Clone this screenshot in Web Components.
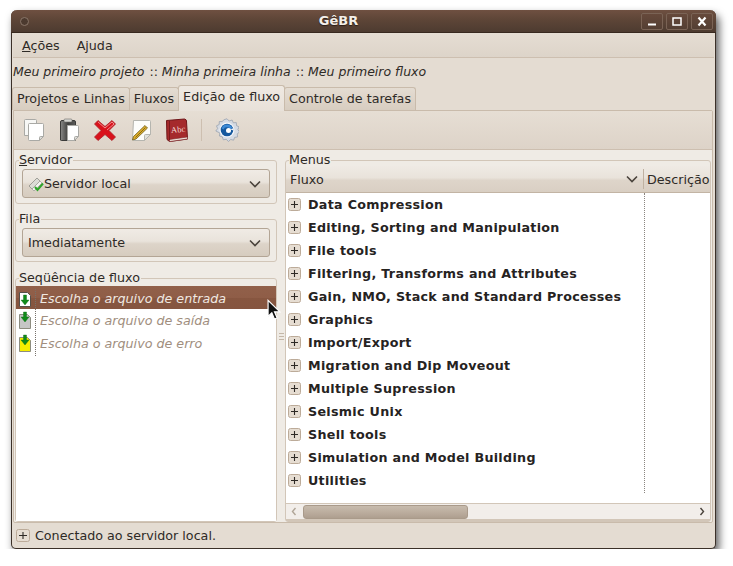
<!DOCTYPE html>
<html lang="pt">
<head>
<meta charset="utf-8">
<title>GêBR</title>
<style>
  html, body { margin: 0; padding: 0; background: #fff; overflow: hidden; }
  body { font: 12.7px "DejaVu Sans", sans-serif; color: #2e2a26; }
</style>
</head>
<body>
<ge-window>
  <ge-titlebar slot="title">GêBR</ge-titlebar>
  <ge-menubar></ge-menubar>
  <ge-crumbs></ge-crumbs>
  <ge-tabs></ge-tabs>
  <ge-panel>
    <ge-toolbar slot="toolbar"></ge-toolbar>
    <div slot="left">
      <ge-frame label="Servidor" mnemonic="S" pad="8px 6px 5px">
        <ge-combo server>Servidor local</ge-combo>
      </ge-frame>
      <ge-frame label="Fila" pad="8px 6px 4px" style="margin-top:15px">
        <ge-combo>Imediatamente</ge-combo>
      </ge-frame>
      <ge-frame label="Seqüência de fluxo" pad="7px 0 0" grow style="margin-top:16px">
        <ge-flow-list></ge-flow-list>
      </ge-frame>
    </div>
    <ge-frame slot="right" label="Menus" pad="5px 0 0" grow>
      <ge-menu-tree></ge-menu-tree>
    </ge-frame>
  </ge-panel>
  <ge-status>Conectado ao servidor local.</ge-status>
  <ge-cursor></ge-cursor>
</ge-window>

<script>
// small expander box used by the tree and the status bar
const expander = (w, h) => `<svg width="${w}" height="${h}" viewBox="0 0 ${w} ${h}" style="display:block;flex:none">
  <rect x=".5" y=".5" width="${w - 1}" height="${h - 1}" rx="2" fill="#e6ddd2" stroke="#bcab99"/>
  <path d="M3 ${h / 2}h${w - 6}M${w / 2} 3v${h - 6}" stroke="#2e2a26" stroke-width="1.1"/>
</svg>`;

const CHEVRON = `<svg width="14" height="8" viewBox="0 0 14 8" style="display:block;flex:none">
  <path d="M2 1.500l5 5 5-5" fill="none" stroke="#4a433c" stroke-width="1.600"/>
</svg>`;

class GeWindow extends HTMLElement {
  constructor() {
    super();
    this.attachShadow({ mode: 'open' });
  }
  connectedCallback() {
    this.shadowRoot.innerHTML = `
      <style>
        :host {
          display: flex;
          flex-direction: column;
          position: relative;
          box-sizing: border-box;
          width: 705px;
          height: 539px;
          margin: 10px 0 0 11px;
          background: #e4dcd2;
          border: 1px solid #3b3028;
          border-top: 0;
          border-radius: 6px 6px 5px 5px;
          box-shadow: 3px 5px 8px rgba(0,0,0,.65);
        }
      </style>
      <slot name="title"></slot>
      <slot></slot>`;
  }
}

class GeTitlebar extends HTMLElement {
  constructor() {
    super();
    this.attachShadow({ mode: 'open' });
  }
  connectedCallback() {
    this.shadowRoot.innerHTML = `
      <style>
        :host {
          display: flex;
          align-items: center;
          flex: none;
          height: 23px;
          margin: 0 -1px;
          padding: 0 3px 0 9px;
          box-sizing: border-box;
          position: relative;
          background: linear-gradient(#6f5041, #5d4537 45%, #4d3b30);
          border-bottom: 1px solid #38291f;
          border-radius: 6px 6px 0 0;
          color: #f4efe9;
          font-weight: bold;
          font-size: 13px;
        }
        .dot {
          width: 7px; height: 7px; border-radius: 50%;
          border: 1px solid #8a7669;
          background: #4c3a2f;
        }
        .name {
          position: absolute; left: 0; right: 50px; top: 0; line-height: 22px;
          text-align: center;
          text-shadow: 0 1px 1px #2a1d15;
        }
        .btns { margin-left: auto; display: flex; gap: 3px; position: relative; }
        .btn {
          width: 20px; height: 15px;
          border: 1px solid #7a6355;
          border-radius: 2px;
          background: linear-gradient(#66493b, #543f33);
          display: flex; align-items: center; justify-content: center;
        }
      </style>
      <div class="dot"></div>
      <div class="name"><slot></slot></div>
      <div class="btns">
        <div class="btn"><svg width="12" height="11" viewBox="0 0 12 11"><path d="M2 8.500h8" stroke="#fff" stroke-width="2"/></svg></div>
        <div class="btn"><svg width="12" height="11" viewBox="0 0 12 11"><rect x="2" y="2" width="8" height="7" fill="none" stroke="#fff" stroke-width="1.500"/></svg></div>
        <div class="btn"><svg width="12" height="11" viewBox="0 0 12 11"><path d="M2.500 1.500l7 8M9.500 1.500l-7 8" stroke="#fff" stroke-width="2.200"/></svg></div>
      </div>`;
  }
}

class GeMenubar extends HTMLElement {
  constructor() {
    super();
    this.attachShadow({ mode: 'open' });
  }
  connectedCallback() {
    this.shadowRoot.innerHTML = `
      <style>
        :host {
          display: flex;
          flex: none;
          gap: 17px;
          height: 25px;
          margin: 0 1px;
          padding: 0 9px;
          align-items: center;
          box-sizing: border-box;
          background: linear-gradient(#e5ddd3, #ddd4c9);
          border-bottom: 1px solid #cdbfb0;
        }
        u { text-underline-offset: 1px; }
      </style>
      <span><u>A</u>ções</span>
      <span>Ajuda</span>`;
  }
}

class GeCrumbs extends HTMLElement {
  constructor() {
    super();
    this.attachShadow({ mode: 'open' });
  }
  connectedCallback() {
    this.shadowRoot.innerHTML = `
      <style>
        :host {
          display: block;
          flex: none;
          height: 27px;
          line-height: 27px;
          padding-left: 1px;
          white-space: nowrap;
          font-style: italic;
          font-size: 12.5px;
        }
        b { font-weight: normal; font-style: normal; margin-left: 1px; }
      </style>
      <span>Meu primeiro projeto <b>::</b> Minha primeira linha <b>::</b> Meu primeiro fluxo</span>`;
  }
}

class GeTabs extends HTMLElement {
  constructor() {
    super();
    this.attachShadow({ mode: 'open' });
  }
  connectedCallback() {
    const tabs = ['Projetos e Linhas', 'Fluxos', 'Edição de fluxo', 'Controle de tarefas'];
    this.shadowRoot.innerHTML = `
      <style>
        :host {
          display: flex;
          flex: none;
          align-items: flex-end;
          height: 25px;
          margin-left: 1px;
          position: relative;
          z-index: 1;
        }
        .tab {
          box-sizing: border-box;
          height: 23px;
          line-height: 22px;
          padding: 0 4px;
          border: 1px solid #c9bbab;
          border-bottom: 0;
          border-radius: 3px 3px 0 0;
          background: linear-gradient(#e4dcd2, #d8cdc0);
          margin-left: -1px;
          white-space: nowrap;
        }
        .tab:first-child { margin-left: 0; }
        .tab.on {
          height: 26px;
          margin-bottom: -1px;
          line-height: 22px;
          background: linear-gradient(#efe9e2, #e8e1d9);
          z-index: 1;
        }
      </style>
      ${tabs.map((t, i) => `<div class="tab${i === 2 ? ' on' : ''}">${t}</div>`).join('')}`;
  }
}

class GeToolbar extends HTMLElement {
  constructor() {
    super();
    this.attachShadow({ mode: 'open' });
  }
  connectedCallback() {
    this.shadowRoot.innerHTML = `
      <style>
        :host {
          display: flex;
          align-items: center;
          height: 39px;
          padding-left: 7px;
          box-sizing: border-box;
          background: linear-gradient(#e6ded4, #ddd3c8);
          border-bottom: 1px solid #cdbfb0;
        }
        svg { display: block; flex: none; }
        .i { width: 24px; height: 24px; margin-right: 12px; }
        .sep { width: 1px; height: 22px; background: #cdbfb0; margin: 0 13px 0 0; }
      </style>
      <div class="i"><svg width="24" height="24" viewBox="0 0 24 24">
        <path d="M3.500 2.500q0-1 1-1h10q1 0 1 1v15h-12z" fill="#f7f7f5" stroke="#a9a9a5"/>
        <path d="M7.500 6.500q0-1 1-1h13q1 0 1 1v12l-4 4h-10q-1 0-1-1z" fill="#fff" stroke="#a9a9a5"/>
        <path d="M18.500 22.500v-3q0-1 1-1h3z" fill="#dcdcd8" stroke="#a9a9a5"/>
      </svg></div>
      <div class="i"><svg width="24" height="24" viewBox="0 0 24 24">
        <defs><linearGradient id="clip" x1="0" x2="1" y1="0" y2="0"><stop offset="0" stop-color="#8a8a88"/><stop offset=".5" stop-color="#3f3f3d"/><stop offset="1" stop-color="#5c5c5a"/></linearGradient></defs>
        <path d="M3.500 4q0-1.500 1.500-1.500h12q1.500 0 1.500 1.500v18q0 .5-1 .5h-13q-1 0-1-.5z" fill="url(#clip)" stroke="#3a3a38"/>
        <rect x="7" y="1" width="8" height="3" rx="1" fill="#d5d5d1" stroke="#6b6b68" stroke-width=".6"/>
        <path d="M10.500 7.500h10q1 0 1 1v10l-4 4h-7z" fill="#fff" stroke="#a9a9a5"/>
        <path d="M17.500 22.500v-3q0-1 1-1h3z" fill="#dcdcd8" stroke="#a9a9a5"/>
      </svg></div>
      <div class="i"><svg width="24" height="24" viewBox="0 0 24 24">
        <path d="M5 2.500l7 6 7-6 3.500 3.500-6.500 6.500 6.500 6.500-3.500 3.500-7-6-7 6-3.500-3.500 6.500-6.500-6.500-6.500z" fill="#d9121c" stroke="#a8232a" stroke-width=".8"/>
        <path d="M5 4l7 6 7-6 2 2-7 6" fill="none" stroke="#f28a8a" stroke-width="1"/>
      </svg></div>
      <div class="i"><svg width="24" height="24" viewBox="0 0 24 24">
        <path d="M4.500 2.500h16q1 0 1 1v13l-6 6h-11q-1 0-1-1z" fill="#fdfdfb" stroke="#b5b5af"/>
        <path d="M15.500 22.500v-5q0-1 1-1h5z" fill="#e2e2dc" stroke="#b5b5af"/>
        <path d="M16 7.500l2.500 2.500-11.500 11-3.500 1 1-3.500z" fill="#dfae2b" stroke="#6a5a1c" stroke-width=".8"/>
        <path d="M6.500 19.500l10-10" stroke="#7d6414" stroke-width=".9"/>
      </svg></div>
      <div class="i"><svg width="24" height="24" viewBox="0 0 24 24">
        <path d="M1.500 2.500l18-1.500q2 .5 2 2l1 18-18 2.500-2.500-2z" fill="#a52a2c" stroke="#6f1618"/>
        <path d="M4.500 23.500l18-2.500v-2l-18 2.500z" fill="#f1e9e0" stroke="#7d2426" stroke-width=".6"/>
        <path d="M4.500 3v19" stroke="#7c1a1d" stroke-width="1"/>
        <text x="6" y="14.500" font-family="Liberation Serif" font-size="8.500" fill="#f6dcd8" transform="rotate(-6 12 12)">Abc</text>
      </svg></div>
      <div class="sep"></div>
      <div class="i"><svg width="24" height="24" viewBox="0 0 24 24">
        <path d="M12 .8l2.200 2.200 2.900-1 1.200 2.800 3-.2.200 3 2.600 1.300-1.200 2.700 1.700 2.400-2.400 1.900.4 3-3 .5-1 2.800-2.900-.7-2.300 2-2.100-2.200-3 .5-1-2.900-2.900-.9.500-3L.8 13l1.800-2.400L1.500 7.800l2.700-1.300.1-3 3 .1L8.800 1.800z" fill="#d6dbe3" stroke="#9aa3b0" stroke-width=".8"/>
        <circle cx="12" cy="12" r="7.500" fill="#f4f6f9"/>
        <circle cx="12" cy="12" r="6.300" fill="#15589e"/>
        <path d="M12 6.500a5.500 5.500 0 0 1 5.300 3.500l-2.300 1.500a3 3 0 0 0-3-2.200 3 3 0 0 0-3.300 2.200L6.700 10.500A5.500 5.500 0 0 1 12 6.500z" fill="#3d8ad6"/>
        <circle cx="13.500" cy="12.500" r="2.500" fill="#fff"/>
        <path d="M15.500 11.500l3-1.500v2.500z" fill="#f4f6f9"/>
      </svg></div>`;
  }
}

class GePanel extends HTMLElement {
  constructor() {
    super();
    this.attachShadow({ mode: 'open' });
  }
  connectedCallback() {
    this.shadowRoot.innerHTML = `
      <style>
        :host {
          display: flex;
          flex-direction: column;
          flex: none;
          box-sizing: border-box;
          height: 413px;
          margin: 0 2px 0 1px;
          border: 1px solid #c9bbab;
          border-radius: 0 2px 2px 2px;
          background: #efebe5;
          position: relative;
        }
        .paned { display: flex; flex: 1; min-height: 0; }
        .left { display: flex; flex: none; width: 262px; margin: 10px 0 0 1px; }
        .right { display: flex; flex: 1; margin: 10px 1px 0 0; min-width: 0; }
        .grip {
          width: 8px; flex: none;
          display: flex; flex-direction: column; justify-content: center; gap: 2px;
          align-items: center;
          box-sizing: border-box;
        }
        .grip i { display: block; width: 5px; height: 1px; background: #c4b7a8; }
        ::slotted([slot=left]) { display: flex; flex-direction: column; flex: 1; min-width: 0; }
        ::slotted([slot=right]) { flex: 1; min-width: 0; }
      </style>
      <slot name="toolbar"></slot>
      <div class="paned">
        <div class="left"><slot name="left"></slot></div>
        <div class="grip"><i></i><i></i><i></i></div>
        <div class="right"><slot name="right"></slot></div>
      </div>`;
  }
}

class GeFrame extends HTMLElement {
  constructor() {
    super();
    this.attachShadow({ mode: 'open' });
  }
  connectedCallback() {
    const label = this.getAttribute('label');
    const m = this.getAttribute('mnemonic');
    const text = m ? `<u>${m}</u>${label.slice(m.length)}` : label;
    this.shadowRoot.innerHTML = `
      <style>
        :host {
          display: flex;
          flex-direction: column;
          box-sizing: border-box;
          min-height: 0;
          min-width: 0;
          position: relative;
          border: 1px solid #d2c6b8;
          border-radius: 3px;
          padding: ${this.getAttribute('pad')};
          ${this.hasAttribute('grow') ? 'flex: 1;' : 'flex: none;'}
        }
        .label {
          position: absolute;
          left: 3px;
          top: -9px;
          padding-right: 1px;
          line-height: 15px;
          background: #efebe5;
          color: #2e2a26;
        }
        u { text-underline-offset: 1px; }
      </style>
      <div class="label">${text}</div>
      <slot></slot>`;
  }
}

class GeCombo extends HTMLElement {
  constructor() {
    super();
    this.attachShadow({ mode: 'open' });
  }
  connectedCallback() {
    const icon = this.hasAttribute('server') ? `
      <svg width="17" height="16" viewBox="0 0 17 16" style="display:block;flex:none;margin:0 0 0 1px">
        <path d="M1 10l8-8 3 3-8 8z" fill="#dcdcd6" stroke="#8e8e88" stroke-width=".8"/>
        <path d="M4 13l8-8 2 2-8 8z" fill="#f3f3ef" stroke="#9a9a94" stroke-width=".7"/>
        <path d="M7 11l2.500 3 5.500-6.500" fill="none" stroke="#2fa52a" stroke-width="2"/>
      </svg>` : '';
    this.shadowRoot.innerHTML = `
      <style>
        :host {
          display: flex;
          align-items: center;
          box-sizing: border-box;
          height: 29px;
          padding: 0 7px 0 ${icon ? '4px' : '5px'};
          border: 1px solid #b3a595;
          border-radius: 3px;
          background: linear-gradient(#f0ebe5, #e9e3db 45%, #ddd4c9 55%, #d6ccbf);
        }
        .t { flex: 1; white-space: nowrap; margin-left: ${icon ? '-1px' : '0'}; }
      </style>
      ${icon}<div class="t"><slot></slot></div>${CHEVRON}`;
  }
}

class GeFlowList extends HTMLElement {
  constructor() {
    super();
    this.attachShadow({ mode: 'open' });
  }
  fileIcon(fill, on) {
    return `<svg width="12" height="19" viewBox="0 0 12 19" style="display:block;flex:none">
      <path d="M.5 3.500h8l3 3v11h-11z" fill="${fill}" stroke="${on ? '#55504a' : '#8d8d80'}"/>
      <path d="M4.500 ${on ? 6 : 1}h3v5h2.500l-4 5-4-5h2.500z" fill="#108a1a" stroke="#0a6a12" stroke-width=".4"/>
    </svg>`;
  }
  connectedCallback() {
    const rows = [
      ['#fff', 'Escolha o arquivo de entrada'],
      ['#c6c6c6', 'Escolha o arquivo de saída'],
      ['#f6ee00', 'Escolha o arquivo de erro']
    ];
    this.shadowRoot.innerHTML = `
      <style>
        :host {
          display: block;
          flex: 1;
          background: #fff;
          position: relative;
          font-style: italic;
          color: #a08e7e;
        }
        .row {
          display: flex;
          align-items: center;
          height: 23px;
          box-sizing: border-box;
          padding: 1px 0 0 3px;
          white-space: nowrap;
        }
        .row:nth-child(n+3) { height: 22.500px; }
        .row span { margin-left: 9px; }
        .row.on {
          background: linear-gradient(#91604a, #8f5d47 50%, #875640 52%, #855540);
          color: #f0e9e2;
        }
        .line {
          position: absolute;
          left: 19px; top: 3px; height: 67px;
          border-left: 1px dotted #77716a;
        }
      </style>
      ${rows.map((r, i) => `<div class="row${i === 0 ? ' on' : ''}">${this.fileIcon(r[0], i === 0)}<span>${r[1]}</span></div>`).join('')}
      <div class="line"></div>`;
  }
}

class GeMenuTree extends HTMLElement {
  constructor() {
    super();
    this.attachShadow({ mode: 'open' });
  }
  connectedCallback() {
    const items = [
      'Data Compression',
      'Editing, Sorting and Manipulation',
      'File tools',
      'Filtering, Transforms and Attributes',
      'Gain, NMO, Stack and Standard Processes',
      'Graphics',
      'Import/Export',
      'Migration and Dip Moveout',
      'Multiple Supression',
      'Seismic Unix',
      'Shell tools',
      'Simulation and Model Building',
      'Utilities'
    ];
    this.shadowRoot.innerHTML = `
      <style>
        :host {
          display: flex;
          flex-direction: column;
          flex: 1;
          min-height: 0;
          min-width: 0;
          background: #fff;
        }
        .head {
          display: flex;
          flex: none;
          height: 27px;
          box-sizing: border-box;
          background: linear-gradient(#efeae4, #e9e3db 45%, #ded5ca 55%, #d9cfc3);
          border-bottom: 1px solid #c2b4a4;
          align-items: center;
        }
        .c1 {
          display: flex; align-items: center;
          flex: none;
          width: 358px; box-sizing: border-box;
          padding: 0 4px;
          height: 20px;
          border-right: 1px solid #bfb1a1;
          justify-content: space-between;
        }
        .c2 { padding-left: 3px; white-space: nowrap; overflow: hidden; flex: 1; min-width: 0; }
        .body { flex: 1; position: relative; overflow: hidden; }
        .row {
          display: flex;
          align-items: center;
          height: 23px;
          gap: 7px;
          padding-left: 2px;
          font-weight: bold;
          font-size: 12.7px;
          letter-spacing: .3px;
          white-space: nowrap;
          color: #26231f;
        }
        .vline {
          position: absolute;
          left: 358px; top: 0; height: 300px;
          border-left: 1px dotted #8a8580;
        }
        .scroll {
          flex: none;
          height: 18px;
          box-sizing: border-box;
          display: flex;
          align-items: center;
          padding: 0 5px;
          background: #f2eeea;
          border: 1px solid #d2c6b8;
          border-width: 1px 0 2px;
        }
        .track { flex: 1; display: flex; padding-left: 6px; align-items: center; }
        .thumb {
          width: 165px; height: 14px; box-sizing: border-box;
          border: 1px solid #a99a8a;
          border-radius: 3px;
          background: linear-gradient(#c7bbad, #bcae9f 50%, #ae9f8f);
        }
        svg.a { display: block; flex: none; }
      </style>
      <div class="head">
        <div class="c1"><span>Fluxo</span>${CHEVRON}</div>
        <div class="c2">Descrição</div>
      </div>
      <div class="body">
        ${items.map(t => `<div class="row">${expander(13, 13)}<span>${t}</span></div>`).join('')}
        <div class="vline"></div>
      </div>
      <div class="scroll">
        <svg class="a" width="6" height="9" viewBox="0 0 6 9"><path d="M4.500 1L1.500 4.500l3 3.500" fill="none" stroke="#b0a597" stroke-width="1.400"/></svg>
        <div class="track"><div class="thumb"></div></div>
        <svg class="a" width="6" height="9" viewBox="0 0 6 9"><path d="M1.500 1l3 3.500-3 3.500" fill="none" stroke="#4a433c" stroke-width="1.400"/></svg>
      </div>`;
  }
}

class GeStatus extends HTMLElement {
  constructor() {
    super();
    this.attachShadow({ mode: 'open' });
  }
  connectedCallback() {
    this.shadowRoot.innerHTML = `
      <style>
        :host {
          display: flex;
          flex: 1;
          align-items: center;
          gap: 5px;
          padding-left: 4px;
        }
      </style>
      ${expander(14, 13)}<span><slot></slot></span>`;
  }
}

// mouse pointer lying over the list
class GeCursor extends HTMLElement {
  constructor() {
    super();
    this.attachShadow({ mode: 'open' });
  }
  connectedCallback() {
    this.shadowRoot.innerHTML = `
      <style>
        :host { position: absolute; left: 255px; top: 289px; width: 15px; height: 22px; }
      </style>
      <svg width="15" height="22" viewBox="0 0 14 20" style="display:block">
        <path d="M1 1v15l3.500-3.500 2.500 6 2.500-1-2.500-5.800h5z" fill="#111" stroke="#fff" stroke-width="1.100"/>
      </svg>`;
  }
}

customElements.define('ge-window', GeWindow);
customElements.define('ge-titlebar', GeTitlebar);
customElements.define('ge-menubar', GeMenubar);
customElements.define('ge-crumbs', GeCrumbs);
customElements.define('ge-tabs', GeTabs);
customElements.define('ge-toolbar', GeToolbar);
customElements.define('ge-panel', GePanel);
customElements.define('ge-frame', GeFrame);
customElements.define('ge-combo', GeCombo);
customElements.define('ge-flow-list', GeFlowList);
customElements.define('ge-menu-tree', GeMenuTree);
customElements.define('ge-status', GeStatus);
customElements.define('ge-cursor', GeCursor);
</script>
</body>
</html>
